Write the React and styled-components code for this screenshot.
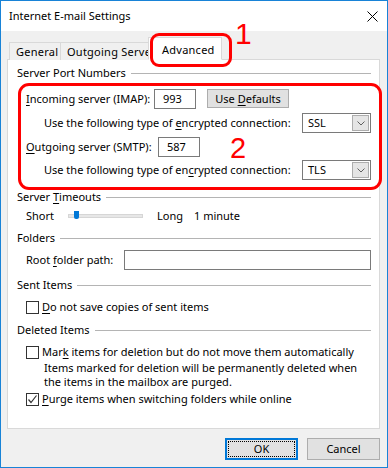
import React from 'react';
import styled, { createGlobalStyle } from 'styled-components';

const GlobalStyle = createGlobalStyle`
  html, body { margin: 0; padding: 0; background: #f0f0f0; }
  body {
    font-family: "Noto Sans", "Open Sans", sans-serif;
    font-size: 11px;
    line-height: 14px;
    color: #000;
  }
  * { box-sizing: border-box; }
`;

const Window = styled.div`
  position: relative;
  width: 388px;
  height: 468px;
  border: 1px solid #1883d7;
  background: #f0f0f0;
  display: flex;
  flex-direction: column;
`;

const TitleBar = styled.div`
  height: 30px;
  background: #fff;
  display: flex;
  align-items: center;
  justify-content: space-between;
  padding: 0 9px 0 8px;
`;

const Body = styled.div`
  flex: 1;
  display: flex;
  flex-direction: column;
  padding: 6px 7px 0 6px;
`;

const TabRow = styled.div`
  display: flex;
  align-items: flex-end;
  padding-left: 2px;
  margin-bottom: -1px;
  position: relative;
  z-index: 1;
  letter-spacing: 0.25px;
`;

const Tab = styled.div`
  height: ${p => (p.$active ? 23 : 18)}px;
  width: ${p => p.$w}px;
  margin-left: ${p => (p.$active ? -1 : 0)}px;
  padding: ${p => (p.$active ? '2px 0 0 13px' : '1px 0 0 6px')};
  background: ${p => (p.$active ? '#fff' : '#f0f0f0')};
  border: 1px solid #d9d9d9;
  border-bottom: ${p => (p.$active ? '1px solid #fff' : 'none')};
  border-left: ${p => (p.$first || p.$active ? '1px solid #d9d9d9' : 'none')};
  border-right: ${p => (p.$clipped ? 'none' : '1px solid #d9d9d9')};
  white-space: nowrap;
  overflow: hidden;
  display: flex;
  align-items: center;
  position: relative;
  z-index: ${p => (p.$active ? 2 : 0)};
`;

const Panel = styled.div`
  height: 370px;
  background: #fff;
  border: 1px solid #d9d9d9;
  padding: 6px 8px 0 9px;
  display: flex;
  flex-direction: column;
`;

const Legend = styled.div`
  display: flex;
  align-items: center;
  height: 14px;
  margin-top: ${p => p.$mt || 0}px;
  white-space: pre;

  &::after {
    content: '';
    flex: 1;
    height: 1px;
    margin-left: 5px;
    background: #b4b4b4;
  }
`;

const Row = styled.div`
  display: flex;
  align-items: center;
  height: ${p => p.$h || 14}px;
  margin-top: ${p => p.$mt || 0}px;
  padding-left: ${p => p.$indent || 9}px;
  justify-content: ${p => (p.$spread ? 'space-between' : 'flex-start')};
`;

const FieldLabel = styled.span`
  width: ${p => p.$w}px;
  flex-shrink: 0;
  white-space: nowrap;
`;

const TextBox = styled.div`
  width: ${p => (p.$w ? `${p.$w}px` : 'auto')};
  flex: ${p => (p.$w ? '0 0 auto' : 1)};
  height: 20px;
  border: 1px solid #7a7a7a;
  background: #fff;
  padding-left: 8px;
  display: flex;
  align-items: center;
`;

const PushButton = styled.button`
  font: inherit;
  color: #000;
  width: ${p => p.$w}px;
  height: ${p => p.$h}px;
  margin-left: ${p => p.$ml || 0}px;
  background: #e1e1e1;
  border: ${p => (p.$default ? '2px solid #0078d7' : '1px solid #adadad')};
  padding: 0;
  position: relative;
  display: flex;
  align-items: center;
  justify-content: center;
  white-space: pre;

  &::after {
    content: '';
    display: ${p => (p.$default ? 'block' : 'none')};
    position: absolute;
    inset: 1px;
    border: 1px dotted #000;
  }
`;

const Combo = styled.div`
  width: 69px;
  height: 20px;
  border: 1px solid #7a7a7a;
  background: #fff;
  display: flex;
  align-items: center;
  padding: 1px;
`;

const ComboText = styled.span`
  flex: 1;
  padding-left: 4px;
`;

const ComboArrow = styled.span`
  width: 17px;
  height: 16px;
  background: #e5e5e5;
  border: 1px solid #adadad;
  display: flex;
  align-items: center;
  justify-content: center;
`;

const Track = styled.div`
  position: relative;
  width: 75px;
  height: 4px;
  background: #e7e7e7;
  border: 1px solid #d6d6d6;
`;

const Thumb = styled.div`
  position: absolute;
  left: 5px;
  top: -4px;
  width: 5px;
  height: 8px;
  background: #0078d7;
  border-radius: 0 0 2px 2px;
`;

const Spaced = styled.span`
  margin-left: ${p => p.$ml}px;
`;

const CheckRow = styled.div`
  display: flex;
  align-items: center;
  gap: 3px;
  height: 14px;
  padding-left: 9px;
  margin-top: ${p => p.$mt || 0}px;
`;

const Box = styled.span`
  width: 13px;
  height: 13px;
  border: 1px solid #333;
  background: #fff;
  display: flex;
  align-items: center;
  justify-content: center;
`;

const Note = styled.div`
  padding-left: 27px;
  line-height: 14px;
  margin-top: ${p => p.$mt || 0}px;
`;

const Footer = styled.div`
  display: flex;
  justify-content: flex-end;
  margin-top: 9px;
  gap: 9px;
`;

const Mark = styled.div`
  position: absolute;
  left: ${p => p.$x}px;
  top: ${p => p.$y}px;
  width: ${p => p.$w}px;
  height: ${p => p.$h}px;
  border: 3px solid #f00;
  border-radius: ${p => p.$r}px;
  pointer-events: none;
  z-index: 5;
`;

const Number = styled.div`
  position: absolute;
  left: ${p => p.$x}px;
  top: ${p => p.$y}px;
  font-family: "Liberation Sans", Arial, sans-serif;
  font-size: ${p => p.$size}px;
  line-height: 1;
  color: #f00;
  z-index: 5;
`;

const U = styled.span`
  text-decoration: underline;
  text-underline-offset: 2px;
`;

const Chevron = () => (
  <svg width="8" height="5" viewBox="0 0 8 5">
    <polyline points="0.5,0.5 4,4 7.5,0.5" fill="none" stroke="#606060" strokeWidth="1" />
  </svg>
);

const Check = () => (
  <svg width="11" height="11" viewBox="0 0 11 11">
    <polyline points="1.5,5.5 4,8.5 9.5,1.5" fill="none" stroke="#333" strokeWidth="1.2" />
  </svg>
);

function Select({ value }) {
  return (
    <Combo>
      <ComboText>{value}</ComboText>
      <ComboArrow><Chevron /></ComboArrow>
    </Combo>
  );
}

function CheckBox({ checked, children, mt }) {
  return (
    <CheckRow $mt={mt}>
      <Box>{checked && <Check />}</Box>
      <span>{children}</span>
    </CheckRow>
  );
}

export default function App() {
  return (
    <Window>
      <GlobalStyle />
      <TitleBar>
        <span>Internet E-mail Settings</span>
        <svg width="11" height="11" viewBox="0 0 11 11">
          <path d="M0.5 0.5 L10.5 10.5 M10.5 0.5 L0.5 10.5" stroke="#000" strokeWidth="1" />
        </svg>
      </TitleBar>
      <Body>
        <TabRow>
          <Tab $first $w={52}>General</Tab>
          <Tab $clipped $w={88}>Outgoing Server</Tab>
          <Tab $active $w={74}>Advanced</Tab>
        </TabRow>
        <Panel>
          <Legend><span>Server Port Numbers</span></Legend>
          <Row $h={21} $mt={8}>
            <FieldLabel $w={128}><U>I</U>ncoming server (IMAP):</FieldLabel>
            <TextBox $w={42}>993</TextBox>
            <PushButton $w={82} $h={19} $ml={11}><span>Use <U>D</U>efaults</span></PushButton>
          </Row>
          <Row $h={20} $mt={4} $indent={27} $spread>
            <span>Use the following type of <U>e</U>ncrypted connection:</span>
            <Select value="SSL" />
          </Row>
          <Row $h={20} $mt={4}>
            <FieldLabel $w={132}><U>O</U>utgoing server (SMTP):</FieldLabel>
            <TextBox $w={42}>587</TextBox>
          </Row>
          <Row $h={20} $mt={3} $indent={27} $spread>
            <span>Use the following type of en<U>c</U>rypted connection:</span>
            <Select value="TLS" />
          </Row>

          <Legend $mt={10}><span>Server <U>T</U>imeouts</span></Legend>
          <Row $mt={5}>
            <FieldLabel $w={42}>Short</FieldLabel>
            <Track><Thumb /></Track>
            <Spaced $ml={14}>Long</Spaced>
            <Spaced $ml={11}>1 minute</Spaced>
          </Row>

          <Legend $mt={8}><span>Folders</span></Legend>
          <Row $h={20} $mt={5}>
            <FieldLabel $w={98}>Root <U>f</U>older path:</FieldLabel>
            <TextBox />
          </Row>

          <Legend $mt={8}><span>Sent Items</span></Legend>
          <CheckBox mt={8}><U>D</U>o not save copies of sent items</CheckBox>

          <Legend $mt={9}><span>Deleted Items</span></Legend>
          <CheckBox mt={8}>Mar<U>k</U> items for deletion but do not move them automatically</CheckBox>
          <Note $mt={2}>
            Items marked for deletion will be permanently deleted when<br />
            the items in the mailbox are purged.
          </Note>
          <CheckBox checked mt={3}><U>P</U>urge items when switching folders while online</CheckBox>
        </Panel>
        <Footer>
          <PushButton $default $w={73} $h={22}>OK</PushButton>
          <PushButton $w={73} $h={22}>Cancel</PushButton>
        </Footer>
      </Body>

      <Mark $x={149} $y={32} $w={82} $h={34} $r={9} />
      <Number $x={234} $y={18} $size={30}>1</Number>
      <Mark $x={17} $y={82} $w={364} $h={107} $r={11} />
      <Number $x={229} $y={133} $size={29}>2</Number>
    </Window>
  );
}
